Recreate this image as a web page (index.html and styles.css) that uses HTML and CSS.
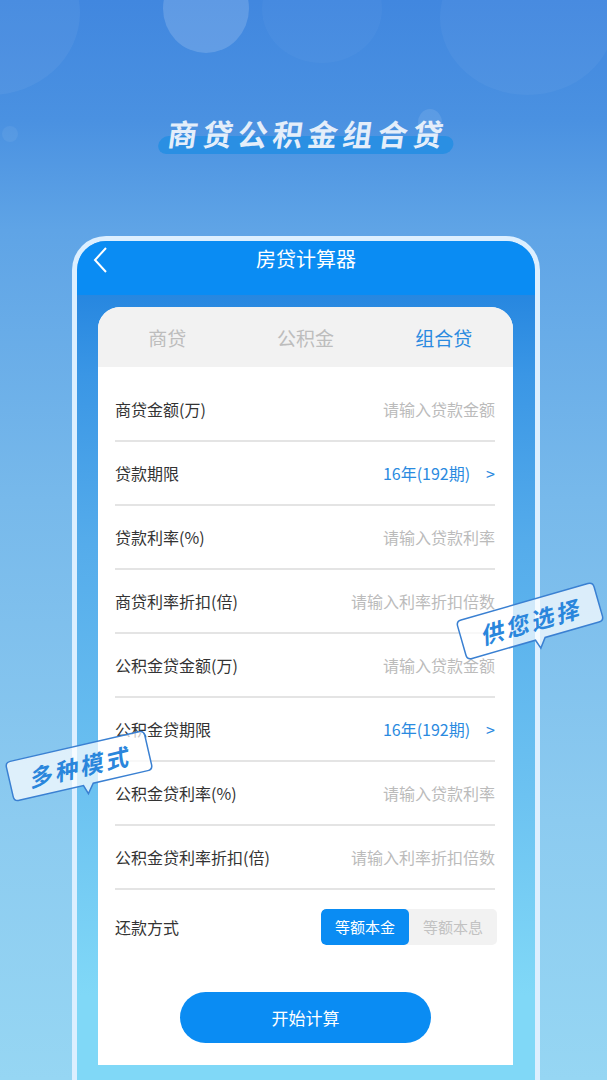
FILE: index.html
```html
<!DOCTYPE html>
<html lang="zh-CN">
<head>
    <meta charset="UTF-8">
    <meta name="viewport" content="width=device-width, initial-scale=1.0">
    <title>房贷计算器</title>
    <link rel="stylesheet" href="styles.css">
</head>
<body>

<div class="page">
    <!-- fondo decorativo -->
    <div class="bubble bubble-a"></div>
    <div class="bubble bubble-b"></div>
    <div class="bubble bubble-c"></div>
    <div class="bubble bubble-d"></div>
    <div class="bubble bubble-e"></div>
    <div class="bubble bubble-f"></div>

    <div class="hero">
        <h1 class="hero-title"><span>商贷公积金组合贷</span></h1>
    </div>

    <div class="phone">
        <div class="phone-header">
            <svg class="back-icon" width="16" height="26" viewBox="0 0 16 26">
                <polyline points="13,1 2,13 13,25" fill="none" stroke="#fff" stroke-width="2"/>
            </svg>
            <span class="phone-title">房贷计算器</span>
            <span></span>
        </div>

        <div class="phone-body">
            <div class="card">
                <div class="tabs">
                    <div class="tab">商贷</div>
                    <div class="tab">公积金</div>
                    <div class="tab active">组合贷</div>
                </div>

                <div class="form">
                    <div class="row">
                        <span class="label">商贷金额(万)</span>
                        <span class="placeholder">请输入贷款金额</span>
                    </div>
                    <div class="row">
                        <span class="label">贷款期限</span>
                        <span class="value">16年(192期)<em>&gt;</em></span>
                    </div>
                    <div class="row">
                        <span class="label">贷款利率(%)</span>
                        <span class="placeholder">请输入贷款利率</span>
                    </div>
                    <div class="row">
                        <span class="label">商贷利率折扣(倍)</span>
                        <span class="placeholder">请输入利率折扣倍数</span>
                    </div>
                    <div class="row">
                        <span class="label">公积金贷金额(万)</span>
                        <span class="placeholder">请输入贷款金额</span>
                    </div>
                    <div class="row">
                        <span class="label">公积金贷期限</span>
                        <span class="value">16年(192期)<em>&gt;</em></span>
                    </div>
                    <div class="row">
                        <span class="label">公积金贷利率(%)</span>
                        <span class="placeholder">请输入贷款利率</span>
                    </div>
                    <div class="row">
                        <span class="label">公积金贷利率折扣(倍)</span>
                        <span class="placeholder">请输入利率折扣倍数</span>
                    </div>
                    <div class="row pay-row">
                        <span class="label">还款方式</span>
                        <div class="toggle">
                            <span class="toggle-item on">等额本金</span>
                            <span class="toggle-item">等额本息</span>
                        </div>
                    </div>
                </div>

                <div class="submit-wrap">
                    <button class="submit">开始计算</button>
                </div>
            </div>
        </div>
    </div>

    <div class="tag tag-right">
        <svg class="tag-shape" width="144" height="52" viewBox="0 0 144 52">
            <path d="M6,1 H138 Q143,1 143,6 V36 Q143,41 138,41 H82 L75,50 L72,41 H6 Q1,41 1,36 V6 Q1,1 6,1 Z"/>
        </svg>
        <span class="tag-text">供您选择</span>
    </div>

    <div class="tag tag-left">
        <svg class="tag-shape" width="144" height="52" viewBox="0 0 144 52">
            <path d="M6,1 H138 Q143,1 143,6 V36 Q143,41 138,41 H82 L75,50 L72,41 H6 Q1,41 1,36 V6 Q1,1 6,1 Z"/>
        </svg>
        <span class="tag-text">多种模式</span>
    </div>
</div>

</body>
</html>
```

FILE: styles.css
```css
body {
    margin: 0;
    padding: 0;
    font-family: "Noto Sans CJK SC", "Noto Sans", sans-serif;
}
.page {
    position: relative;
    width: 607px;
    height: 1080px;
    overflow: hidden;
    background: linear-gradient(180deg, #4187df 0, #4a91e1 120px, #5fa4e6 230px, #77b9eb 500px, #8ccbf0 820px, #96d6f3 1080px);
}
.bubble {
    position: absolute;
    border-radius: 50%;
    background-color: rgba(255, 255, 255, 0.06);
}
.bubble-a {
    left: 163px;
    top: -36px;
    width: 86px;
    height: 89px;
    background-color: rgba(255, 255, 255, 0.16);
}
.bubble-b {
    left: -100px;
    top: -70px;
    width: 180px;
    height: 165px;
    background-color: rgba(255, 255, 255, 0.05);
}
.bubble-c {
    left: 440px;
    top: -60px;
    width: 175px;
    height: 155px;
    background-color: rgba(255, 255, 255, 0.04);
}
.bubble-d {
    left: 262px;
    top: -45px;
    width: 120px;
    height: 108px;
    background-color: rgba(255, 255, 255, 0.03);
}
.bubble-e {
    left: 2px;
    top: 126px;
    width: 16px;
    height: 16px;
}
.bubble-f {
    left: 418px;
    top: 109px;
    width: 24px;
    height: 28px;
    background-color: rgba(255, 255, 255, 0.1);
}
.hero {
    position: relative;
    height: 236px;
    padding-top: 113px;
    box-sizing: border-box;
    text-align: center;
}
.hero-title {
    margin: 0;
    font-size: 30px;
    line-height: 40px;
    font-weight: bold;
    color: #e4eefa;
    letter-spacing: 5px;
}
.hero-title span {
    position: relative;
    display: inline-block;
    padding-left: 5px;
    margin-left: 4px;
    transform: skewX(-8deg);
}
.hero-title span::before {
    content: "";
    position: absolute;
    left: -3px;
    right: -7px;
    bottom: -1px;
    height: 18px;
    border-radius: 9px;
    background-color: #2a8fe3;
    z-index: -1;
}
.phone {
    position: relative;
    margin-left: 72px;
    width: 468px;
    border: 5px solid #dcefff;
    border-bottom: none;
    border-radius: 34px 34px 0 0;
    box-sizing: border-box;
    overflow: hidden;
}
.phone-header {
    display: grid;
    grid-template-columns: 40px 1fr 40px;
    align-items: start;
    height: 54px;
    padding: 0 12px;
    background-color: #0a8cf3;
}
.back-icon {
    margin-top: 6px;
    margin-left: 4px;
}
.phone-title {
    text-align: center;
    color: #fff;
    font-size: 20px;
    line-height: 36px;
}
.phone-body {
    padding: 12px 22px 40px 21px;
    background: linear-gradient(180deg, #2787e0 0, #3a96e5 80px, #55aceb 250px, #6cc2f1 500px, #80d8f7 700px);
}
.card {
    background-color: #fff;
    border-radius: 22px 22px 0 0;
    overflow: hidden;
}
.tabs {
    display: grid;
    grid-template-columns: 1fr 1fr 1fr;
    height: 60px;
    align-items: center;
    text-align: center;
    background-color: #f2f2f2;
    font-size: 19px;
    color: #bdbdbd;
}
.tab.active {
    color: #2a8ae0;
}
.form {
    padding-top: 11px;
}
.row {
    display: flex;
    justify-content: space-between;
    align-items: center;
    height: 62px;
    margin: 0 18px 0 17px;
    border-bottom: 2px solid #e4e4e4;
    font-size: 16px;
}
.label {
    color: #333;
}
.placeholder {
    color: #bbb;
}
.value {
    color: #2a8ae0;
}
.value em {
    font-style: normal;
    margin-left: 16px;
}
.pay-row {
    height: 74px;
    border-bottom: none;
}
.toggle {
    display: flex;
    height: 36px;
    margin-right: -2px;
    border-radius: 5px;
    overflow: hidden;
    background-color: #f2f2f2;
}
.toggle-item {
    width: 88px;
    line-height: 36px;
    text-align: center;
    font-size: 15px;
    color: #c2c2c2;
}
.toggle-item.on {
    background-color: #0a8cf3;
    color: #fff;
    border-radius: 5px;
}
.submit-wrap {
    padding: 28px 0 22px;
    text-align: center;
}
.submit {
    width: 251px;
    height: 51px;
    border: none;
    border-radius: 26px;
    background-color: #0a8cf3;
    color: #fff;
    font-family: inherit;
    font-size: 17px;
}
.tag {
    position: absolute;
    width: 144px;
    height: 42px;
    display: flex;
    align-items: center;
    justify-content: center;
}
.tag-shape {
    position: absolute;
    left: 0;
    top: 0;
    overflow: visible;
}
.tag-shape path {
    fill: rgba(255, 255, 255, 0.72);
    stroke: #3a80d2;
    stroke-width: 1.5;
}
.tag-text {
    position: relative;
    font-size: 23px;
    font-weight: bold;
    font-style: italic;
    letter-spacing: 3px;
    color: #2a86dc;
}
.tag-right {
    left: 458px;
    top: 600px;
    transform: rotate(-16deg);
}
.tag-left {
    left: 7px;
    top: 745px;
    transform: rotate(-13deg);
}
```
